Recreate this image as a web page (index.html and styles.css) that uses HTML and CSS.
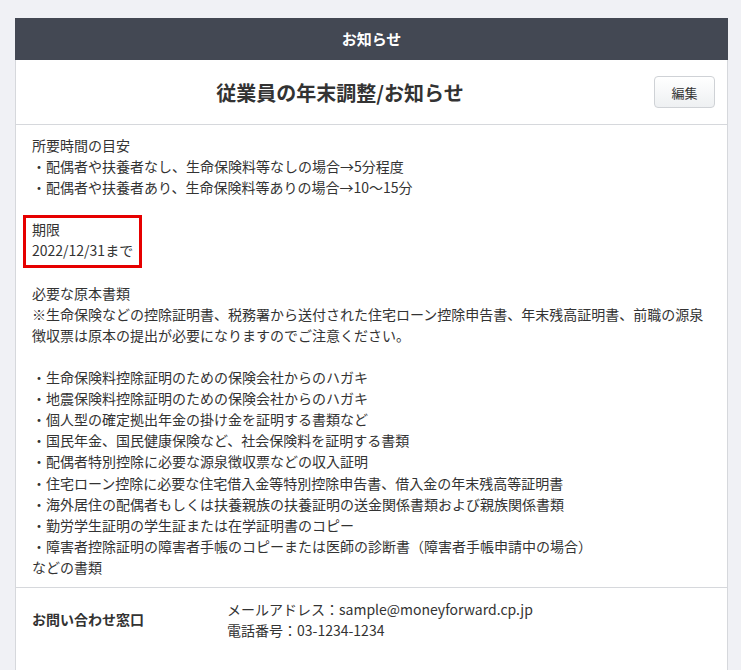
FILE: index.html
```html
<!DOCTYPE html>
<html lang="ja">
<head>
    <meta charset="UTF-8">
    <title>お知らせ</title>
    <link rel="stylesheet" href="styles.css">
</head>
<body>
    <div class="card">
        <header class="card-head">お知らせ</header>

        <div class="title-row">
            <h1>従業員の年末調整/お知らせ</h1>
            <button class="edit-btn">編集</button>
        </div>

        <div class="content">
            <p>所要時間の目安<br>
            ・配偶者や扶養者なし、生命保険料等なしの場合→5分程度<br>
            ・配偶者や扶養者あり、生命保険料等ありの場合→10〜15分</p>

            <p class="deadline">期限<br>2022/12/31まで</p>

            <p>必要な原本書類<br>
            ※生命保険などの控除証明書、税務署から送付された住宅ローン控除申告書、年末残高証明書、前職の源泉徴収票は原本の提出が必要になりますのでご注意ください。</p>

            <p>・生命保険料控除証明のための保険会社からのハガキ<br>
            ・地震保険料控除証明のための保険会社からのハガキ<br>
            ・個人型の確定拠出年金の掛け金を証明する書類など<br>
            ・国民年金、国民健康保険など、社会保険料を証明する書類<br>
            ・配偶者特別控除に必要な源泉徴収票などの収入証明<br>
            ・住宅ローン控除に必要な住宅借入金等特別控除申告書、借入金の年末残高等証明書<br>
            ・海外居住の配偶者もしくは扶養親族の扶養証明の送金関係書類および親族関係書類<br>
            ・勤労学生証明の学生証または在学証明書のコピー<br>
            ・障害者控除証明の障害者手帳のコピーまたは医師の診断書（障害者手帳申請中の場合）<br>
            などの書類</p>
        </div>

        <div class="contact">
            <div class="contact-label">お問い合わせ窓口</div>
            <div class="contact-value">
                メールアドレス：sample@moneyforward.cp.jp<br>
                電話番号：03-1234-1234
            </div>
        </div>
    </div>
</body>
</html>
```

FILE: styles.css
```css
body {
    margin: 0;
    padding: 18px 13px 0 15px;
    background-color: #f0f1f5;
    font-family: "Noto Sans CJK JP", "Noto Sans", sans-serif;
    color: #333;
    font-size: 14px;
}
.card {
    background-color: white;
    border: 1px solid #d6d8dc;
    border-top: none;
    height: 700px;
}
.card-head {
    background-color: #434853;
    color: white;
    font-weight: bold;
    font-size: 15px;
    text-align: center;
    height: 42px;
    line-height: 42px;
    margin: 0 -1px;
}
.title-row {
    height: 64px;
    display: flex;
    align-items: center;
    padding: 0 12px 0 16px;
    border-bottom: 1px solid #d6d8dc;
}
.title-row h1 {
    flex: 1;
    margin: 0;
    font-size: 20px;
    font-weight: bold;
    text-align: center;
    color: #333;
}
.edit-btn {
    margin-left: 6px;
    width: 61px;
    height: 32px;
    border: 1px solid #cfd2d6;
    border-radius: 4px;
    background: linear-gradient(#ffffff, #eef0f2);
    font-family: inherit;
    font-size: 13px;
    color: #333;
}
.content {
    padding: 10px 16px 9px 16px;
    line-height: 21.1px;
}
.content p {
    margin: 0 0 21.1px 0;
}
.content p:last-child {
    margin-bottom: 0;
}
.content p.deadline {
    width: fit-content;
    border: 3px solid #e60000;
    padding: 1px 6px 3px 6px;
    margin: -4px 0 15.1px -9px;
}
.contact {
    border-top: 1px solid #d6d8dc;
    display: flex;
    align-items: center;
    padding: 11px 16px;
    line-height: 21px;
}
.contact-label {
    width: 195px;
    font-weight: bold;
}
```
